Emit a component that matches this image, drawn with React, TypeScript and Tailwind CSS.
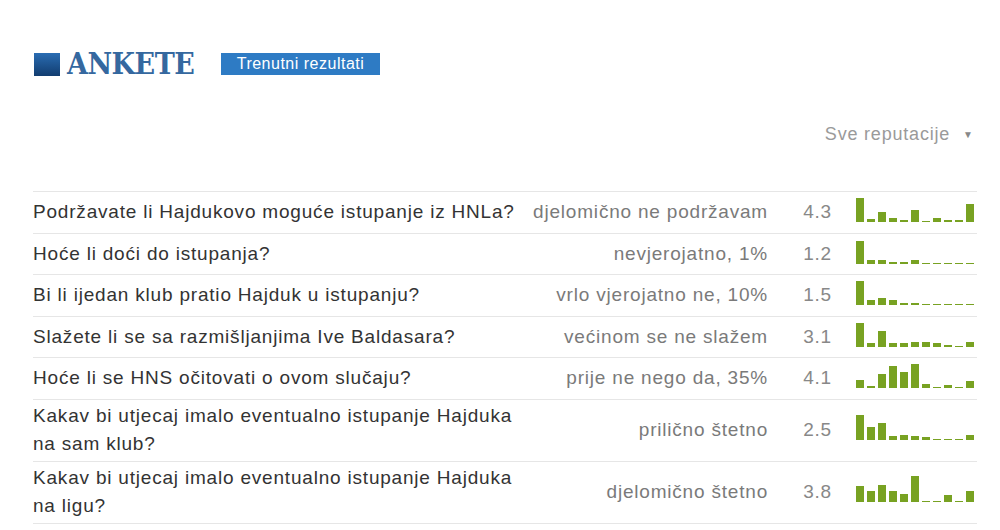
import React from "react";

type Row = { q: string[]; a: string; s: string; bars: number[] };

const rows: Row[] = [
  { q: ["Podržavate li Hajdukovo moguće istupanje iz HNLa?"], a: "djelomično ne podržavam", s: "4.3", bars: [24, 3, 10, 4, 2, 12, 1, 4, 2, 2, 18] },
  { q: ["Hoće li doći do istupanja?"], a: "nevjerojatno, 1%", s: "1.2", bars: [23, 4, 4, 2, 2, 4, 1, 1, 1, 1, 1] },
  { q: ["Bi li ijedan klub pratio Hajduk u istupanju?"], a: "vrlo vjerojatno ne, 10%", s: "1.5", bars: [24, 5, 7, 5, 2, 2, 1, 1, 1, 1, 1] },
  { q: ["Slažete li se sa razmišljanjima Ive Baldasara?"], a: "većinom se ne slažem", s: "3.1", bars: [24, 4, 16, 4, 4, 5, 5, 4, 2, 1, 5] },
  { q: ["Hoće li se HNS očitovati o ovom slučaju?"], a: "prije ne nego da, 35%", s: "4.1", bars: [8, 2, 14, 22, 16, 24, 4, 1, 3, 1, 7] },
  { q: ["Kakav bi utjecaj imalo eventualno istupanje Hajduka", "na sam klub?"], a: "prilično štetno", s: "2.5", bars: [25, 13, 17, 4, 5, 4, 3, 1, 1, 1, 5] },
  { q: ["Kakav bi utjecaj imalo eventualno istupanje Hajduka", "na ligu?"], a: "djelomično štetno", s: "3.8", bars: [16, 11, 17, 11, 8, 26, 1, 1, 7, 1, 11] },
];

function Bars({ values }: { values: number[] }) {
  return (
    <div className="flex items-end gap-[3px] h-[26px] mb-[6px]">
      {values.map((v, i) => (
        <div key={i} className="w-[8px] bg-[#78a222]" style={{ height: `${v}px` }} />
      ))}
    </div>
  );
}

export default function App() {
  return (
    <div
      className="w-[1000px] h-[530px] bg-white overflow-hidden"
      style={{ fontFamily: '"Liberation Sans", Arial, sans-serif' }}
    >
      <div className="pl-[34px] pt-[52px] flex items-center">
        <div className="w-[26px] h-[23px] bg-gradient-to-b from-[#2a6db3] to-[#123d70]" />
        <div
          className="ml-[7px] w-[130px] text-[30px] leading-[24px] font-bold font-stretch-condensed tracking-[-0.5px] text-[#35689f] whitespace-nowrap"
          style={{ fontFamily: '"DejaVu Serif Condensed", "DejaVu Serif", serif' }}
        >
          ANKETE
        </div>
        <div className="ml-[24px] w-[159px] h-[22px] bg-[#2e7bc4] flex items-center justify-center text-white text-[16px] tracking-[0.5px] leading-none">
          Trenutni rezultati
        </div>
      </div>

      <div className="flex justify-end items-center pr-[27px] mt-[45px] text-[#9a9a9a]">
        <span className="text-[18px] tracking-[0.8px]">Sve reputacije</span>
        <span className="ml-[13px] text-[10px] text-[#888]">▼</span>
      </div>

      <div className="ml-[33px] w-[944px] mt-[43px] border-t border-[#e6e6e6]">
        {rows.map((r, i) => (
          <div
            key={i}
            className="grid grid-cols-[500px_235px_64px_145px] items-center min-h-[41.5px] py-[2.5px] border-b border-[#e6e6e6] text-[19px] tracking-[0.8px] leading-[28px]"
          >
            <div className="text-[#333]">
              {r.q.map((l, j) => (
                <div key={j}>{l}</div>
              ))}
            </div>
            <div className="text-right text-[#7a7a7a] whitespace-nowrap">{r.a}</div>
            <div className="text-right text-[#888]">{r.s}</div>
            <div className="pl-[24px] flex items-center">
              <Bars values={r.bars} />
            </div>
          </div>
        ))}
      </div>
    </div>
  );
}
